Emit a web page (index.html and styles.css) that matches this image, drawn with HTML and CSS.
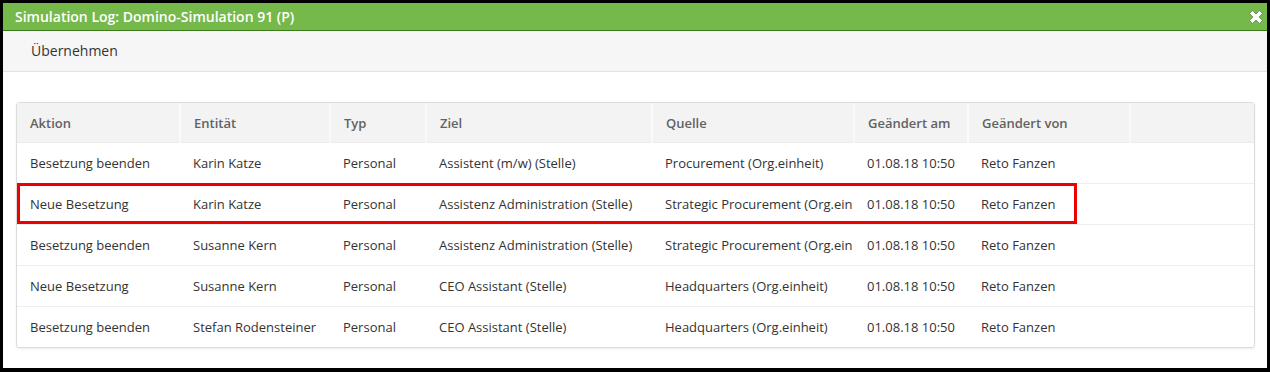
FILE: index.html
```html
<!DOCTYPE html>
<html lang="de">
  <head>
    <meta charset="UTF-8" />
    <title>Simulation Log</title>
    <link rel="stylesheet" href="styles.css">
  </head>
  <body>
    <div class="dialog">
      <div class="dialog-title">
        <span>Simulation Log: Domino-Simulation 91 (P)</span>
        <svg class="close" width="16" height="16" viewBox="0 0 16 16">
          <path d="M1.5 4.5L4.5 1.5L8 5L11.5 1.5L14.5 4.5L11 8L14.5 11.5L11.5 14.5L8 11L4.5 14.5L1.5 11.5L5 8Z"
                fill="#fff" stroke="#3f6f28" stroke-width="0.6" stroke-linejoin="round" />
        </svg>
      </div>

      <div class="toolbar">
        <span class="tool-btn">Übernehmen</span>
      </div>

      <div class="content">
        <div class="grid">
          <table>
            <colgroup>
              <col style="width: 163px">
              <col style="width: 150px">
              <col style="width: 96px">
              <col style="width: 226px">
              <col style="width: 202px">
              <col style="width: 114px">
              <col style="width: 162px">
              <col>
            </colgroup>
            <thead>
              <tr>
                <th>Aktion</th>
                <th>Entität</th>
                <th>Typ</th>
                <th>Ziel</th>
                <th>Quelle</th>
                <th>Geändert am</th>
                <th>Geändert von</th>
                <th></th>
              </tr>
            </thead>
            <tbody>
              <tr>
                <td>Besetzung beenden</td>
                <td>Karin Katze</td>
                <td>Personal</td>
                <td>Assistent (m/w) (Stelle)</td>
                <td>Procurement (Org.einheit)</td>
                <td>01.08.18 10:50</td>
                <td>Reto Fanzen</td>
                <td></td>
              </tr>
              <tr>
                <td>Neue Besetzung</td>
                <td>Karin Katze</td>
                <td>Personal</td>
                <td>Assistenz Administration (Stelle)</td>
                <td>Strategic Procurement (Org.ein</td>
                <td>01.08.18 10:50</td>
                <td>Reto Fanzen</td>
                <td></td>
              </tr>
              <tr>
                <td>Besetzung beenden</td>
                <td>Susanne Kern</td>
                <td>Personal</td>
                <td>Assistenz Administration (Stelle)</td>
                <td>Strategic Procurement (Org.ein</td>
                <td>01.08.18 10:50</td>
                <td>Reto Fanzen</td>
                <td></td>
              </tr>
              <tr>
                <td>Neue Besetzung</td>
                <td>Susanne Kern</td>
                <td>Personal</td>
                <td>CEO Assistant (Stelle)</td>
                <td>Headquarters (Org.einheit)</td>
                <td>01.08.18 10:50</td>
                <td>Reto Fanzen</td>
                <td></td>
              </tr>
              <tr>
                <td>Besetzung beenden</td>
                <td>Stefan Rodensteiner</td>
                <td>Personal</td>
                <td>CEO Assistant (Stelle)</td>
                <td>Headquarters (Org.einheit)</td>
                <td>01.08.18 10:50</td>
                <td>Reto Fanzen</td>
                <td></td>
              </tr>
            </tbody>
          </table>
          <div class="highlight"></div>
        </div>
      </div>
    </div>
  </body>
</html>
```

FILE: styles.css
```css
html, body {
  margin: 0;
  background-color: #000;
}
body {
  padding: 3px 3px 4px 3px;
  font-family: "Open Sans", "Liberation Sans", sans-serif;
  color: #333;
}
.dialog {
  background-color: #fff;
  height: 365px;
  overflow: hidden;
}
.dialog-title {
  display: flex;
  align-items: center;
  justify-content: space-between;
  height: 27px;
  padding: 0 3px 0 12px;
  background-color: #76b94b;
  border-bottom: 1px solid #3d7a1c;
  color: #fff;
  font-size: 14px;
  font-weight: 600;
}
.close {
  display: block;
}
.toolbar {
  height: 38px;
  display: flex;
  align-items: center;
  padding: 0 0 2px 28px;
  background-color: #f6f6f6;
  border-bottom: 1px solid #e2e2e2;
}
.tool-btn {
  font-size: 14px;
  color: #333;
}
.content {
  padding: 30px 12px 0 13px;
}
.grid {
  position: relative;
  border: 1px solid #dcdcdc;
  border-radius: 3px;
  box-shadow: 0 1px 2px rgba(0, 0, 0, 0.08);
}
table {
  width: 100%;
  border-collapse: collapse;
  table-layout: fixed;
  font-size: 13px;
}
th {
  height: 39px;
  padding: 0 0 0 13px;
  text-align: left;
  font-weight: 600;
  color: #626262;
  background-color: #f3f3f3;
  border-right: 2px solid #fafafa;
  border-bottom: 1px solid #ececec;
}
th:last-child {
  border-right: none;
}
td {
  height: 40px;
  padding: 0 0 0 13px;
  white-space: nowrap;
  overflow: hidden;
  border-bottom: 1px solid #eeeeee;
}
tbody tr:last-child td {
  border-bottom: none;
}
.highlight {
  position: absolute;
  left: 0;
  top: 80px;
  width: 1054px;
  height: 35px;
  border: 3px solid #ee0000;
  pointer-events: none;
}
```
